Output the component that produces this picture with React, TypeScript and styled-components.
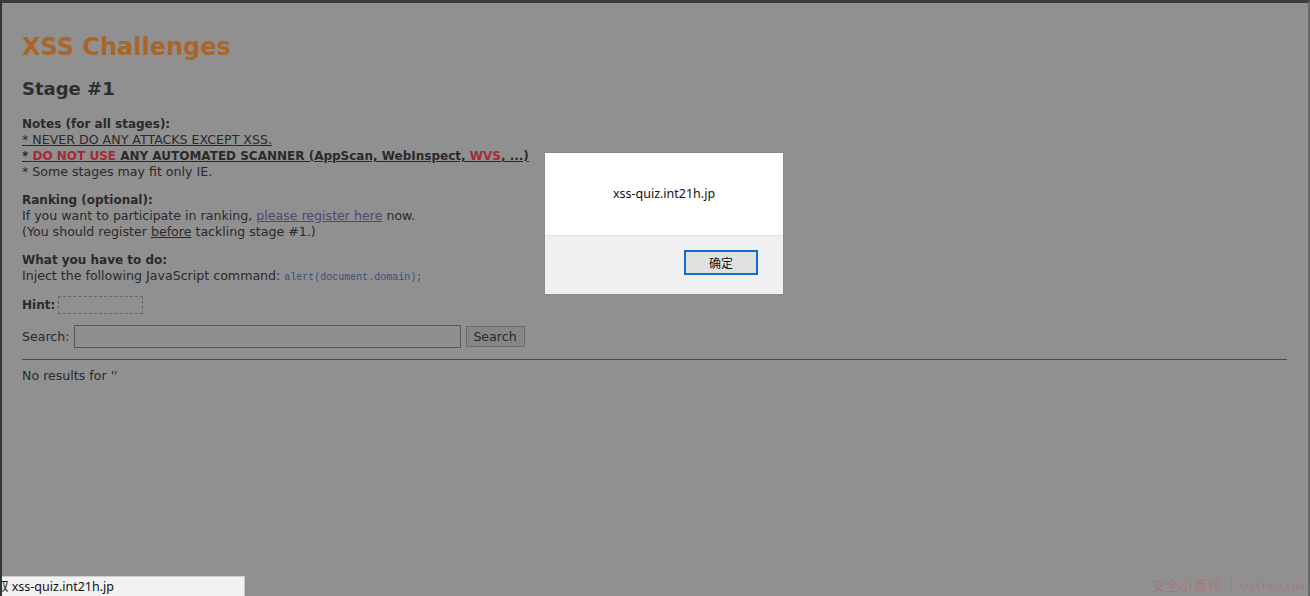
import React from "react";
import styled, { createGlobalStyle } from "styled-components";

const Global = createGlobalStyle`
  html, body { margin: 0; padding: 0; }
  body { background: #909090; overflow: hidden; }
`;

const Page = styled.div`
  position: relative;
  width: 1310px;
  height: 596px;
  box-sizing: border-box;
  background: #909091;
  border-top: 3px solid #3c3c3c;
  border-left: 2px solid #333;
  border-right: 2px solid #6a6a6a;
  padding: 0 21px 0 20px;
  font-family: "DejaVu Sans", Verdana, sans-serif;
  font-size: 12.6px;
  line-height: 16px;
  color: #2a2a2a;
  overflow: hidden;
`;

const Title = styled.h1`
  margin: 29px 0 0;
  font-size: 24px;
  line-height: 30px;
  font-weight: bold;
  color: #a9662c;
`;

const Stage = styled.h2`
  margin: 15px 0 0;
  font-size: 18px;
  line-height: 24px;
  font-weight: bold;
  color: #2e2e2e;
`;

const Section = styled.div<{ $top: number }>`
  margin-top: ${(p) => p.$top}px;
`;

const Head = styled.div`
  font-weight: bold;
  font-size: 12px;
`;

const Line = styled.div<{ $u?: boolean; $b?: boolean }>`
  text-decoration: ${(p) => (p.$u ? "underline" : "none")};
  font-weight: ${(p) => (p.$b ? "bold" : "normal")};
  font-size: ${(p) => (p.$b ? "12px" : "12.6px")};
`;

const Red = styled.span`
  color: #a52a36;
`;

const Link = styled.a`
  color: #58407a;
  text-decoration: underline;
`;

const U = styled.span`
  text-decoration: underline;
`;

const Code = styled.code`
  font-family: "Liberation Mono", "Courier New", monospace;
  font-size: 10px;
  color: #3c4f7e;
`;

const HintRow = styled.div`
  display: flex;
  align-items: center;
  gap: 3px;
  margin-top: 10px;
  font-weight: bold;
  font-size: 12px;
`;

const HintBox = styled.div`
  width: 83px;
  height: 16px;
  border: 1px dashed #676767;
`;

const SearchRow = styled.div`
  display: flex;
  align-items: center;
  margin-top: 11px;
`;

const Input = styled.div`
  width: 385px;
  height: 21px;
  margin-left: 4px;
  border: 1px solid #575757;
  background: #8f8f8f;
`;

const Button = styled.div`
  width: 57px;
  height: 19px;
  margin-left: 5px;
  border: 1px solid #6c6c6c;
  background: #868686;
  color: #2a2a2a;
  display: flex;
  align-items: center;
  justify-content: center;
  font-size: 12.6px;
`;

const Rule = styled.div`
  margin-top: 10px;
  height: 1px;
  border-top: 1px solid #8a8c94;
  background: #604632;
`;

const Results = styled.div`
  margin-top: 8px;
`;

const Dialog = styled.div`
  position: absolute;
  left: 542px;
  top: 149px;
  width: 238px;
  height: 141px;
  border: 1px solid #8a8a8a;
  background: #fff;
  display: flex;
  flex-direction: column;
  font-family: "Noto Sans", "Noto Sans CJK SC", sans-serif;
`;

const DialogBody = styled.div`
  height: 82px;
  display: flex;
  align-items: center;
  justify-content: center;
  font-size: 12.5px;
  color: #111;
`;

const DialogFoot = styled.div`
  flex: 1;
  background: #f0f0f0;
  border-top: 1px solid #dfdfdf;
  display: flex;
  justify-content: flex-end;
  align-items: flex-start;
  padding: 14px 25px 0 0;
`;

const OkButton = styled.div`
  width: 70px;
  height: 21px;
  border: 2px solid #0f6fc6;
  background: #e1e1e1;
  display: flex;
  align-items: center;
  justify-content: center;
  font-family: "Noto Sans CJK SC", sans-serif;
  font-size: 12px;
  color: #111;
`;

const Status = styled.div`
  position: absolute;
  left: -2px;
  bottom: 0;
  width: 244px;
  height: 19px;
  background: #f2f2f2;
  border-top: 1px solid #d0d0d0;
  border-right: 1px solid #c8c8c8;
  font-family: "Noto Sans", "Noto Sans CJK SC", sans-serif;
  font-size: 12.5px;
  line-height: 20px;
  color: #111;
  white-space: nowrap;
  overflow: hidden;
  text-indent: -4px;
`;

const Watermark = styled.div`
  position: absolute;
  right: 3px;
  bottom: 1px;
  font-family: "Noto Sans CJK SC", sans-serif;
  font-size: 13px;
  line-height: 18px;
  color: rgba(200, 90, 90, 0.45);
  letter-spacing: 1px;
  white-space: nowrap;
`;

const WmSmall = styled.span`
  font-family: "Liberation Serif", serif;
  font-size: 11px;
  letter-spacing: 0;
`;

export default function App() {
  return (
    <>
      <Global />
      <Page>
        <Title>XSS Challenges</Title>
        <Stage>Stage #1</Stage>
        <Section $top={15}>
          <Head>Notes (for all stages):</Head>
          <Line $u>* NEVER DO ANY ATTACKS EXCEPT XSS.</Line>
          <Line $u $b>
            * <Red>DO NOT USE</Red> ANY AUTOMATED SCANNER (AppScan, WebInspect, <Red>WVS</Red>, ...)
          </Line>
          <Line>* Some stages may fit only IE.</Line>
        </Section>
        <Section $top={12}>
          <Head>Ranking (optional):</Head>
          <Line>
            If you want to participate in ranking, <Link>please register here</Link> now.
          </Line>
          <Line>
            (You should register <U>before</U> tackling stage #1.)
          </Line>
        </Section>
        <Section $top={12}>
          <Head>What you have to do:</Head>
          <Line>
            Inject the following JavaScript command: <Code>alert(document.domain);</Code>
          </Line>
        </Section>
        <HintRow>
          <span>Hint:</span>
          <HintBox />
        </HintRow>
        <SearchRow>
          <span>Search:</span>
          <Input />
          <Button>Search</Button>
        </SearchRow>
        <Rule />
        <Results>No results for ''</Results>

        <Dialog>
          <DialogBody>xss-quiz.int21h.jp</DialogBody>
          <DialogFoot>
            <OkButton>确定</OkButton>
          </DialogFoot>
        </Dialog>
        <Status>取 xss-quiz.int21h.jp</Status>
        <Watermark>
          安全小百科 &nbsp;| <WmSmall>AQXBK.COM</WmSmall>
        </Watermark>
      </Page>
    </>
  );
}
